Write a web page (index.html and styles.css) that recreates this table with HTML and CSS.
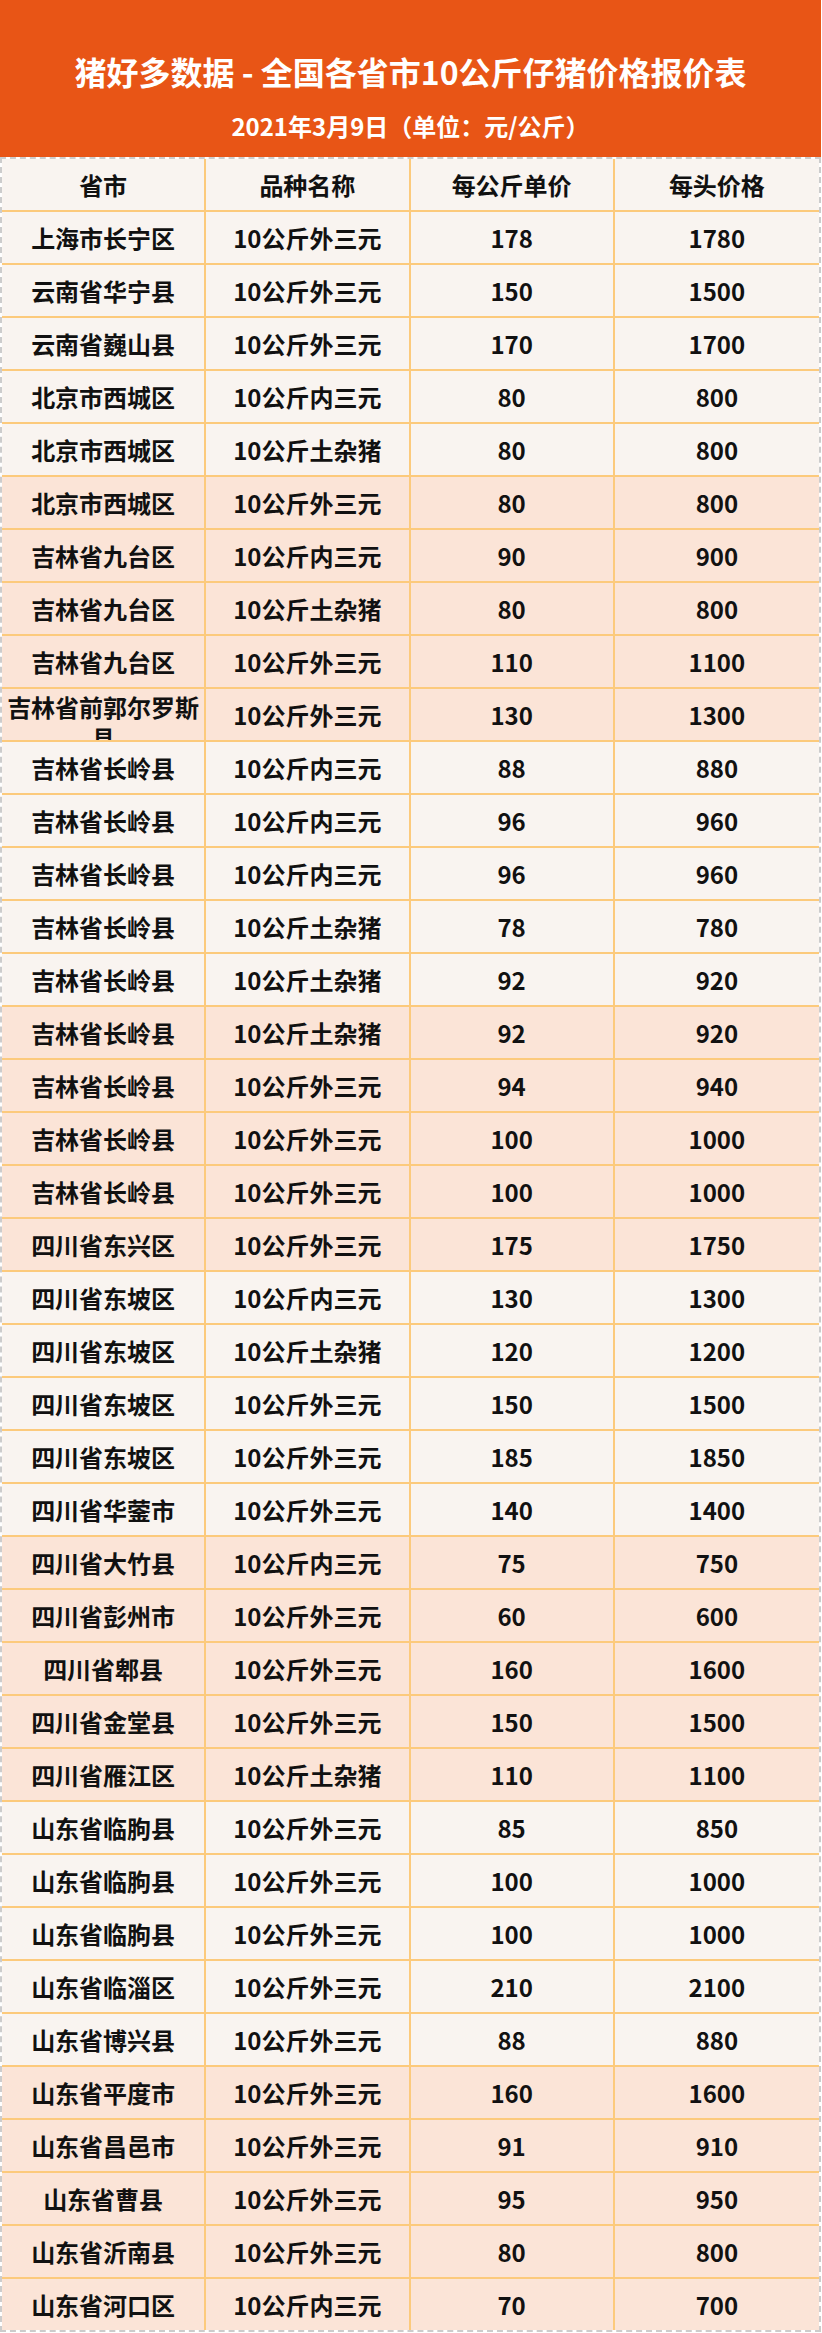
FILE: index.html
```html
<!DOCTYPE html>
<html lang="zh-CN">
<head>
<meta charset="utf-8">
<title>猪好多数据 - 全国各省市10公斤仔猪价格报价表</title>
<link rel="stylesheet" href="styles.css">
</head>
<body>
<div class="page">
  <header class="banner">
    <h1 class="title">猪好多数据 - 全国各省市10公斤仔猪价格报价表</h1>
    <p class="subtitle">2021年3月9日（单位：元/公斤）</p>
  </header>
  <div class="table">
    <div class="row head"><div class="cell">省市</div><div class="cell">品种名称</div><div class="cell">每公斤单价</div><div class="cell">每头价格</div></div>
    <div class="row light"><div class="cell">上海市长宁区</div><div class="cell">10公斤外三元</div><div class="cell">178</div><div class="cell">1780</div></div>
    <div class="row light"><div class="cell">云南省华宁县</div><div class="cell">10公斤外三元</div><div class="cell">150</div><div class="cell">1500</div></div>
    <div class="row light"><div class="cell">云南省巍山县</div><div class="cell">10公斤外三元</div><div class="cell">170</div><div class="cell">1700</div></div>
    <div class="row light"><div class="cell">北京市西城区</div><div class="cell">10公斤内三元</div><div class="cell">80</div><div class="cell">800</div></div>
    <div class="row light"><div class="cell">北京市西城区</div><div class="cell">10公斤土杂猪</div><div class="cell">80</div><div class="cell">800</div></div>
    <div class="row pink"><div class="cell">北京市西城区</div><div class="cell">10公斤外三元</div><div class="cell">80</div><div class="cell">800</div></div>
    <div class="row pink"><div class="cell">吉林省九台区</div><div class="cell">10公斤内三元</div><div class="cell">90</div><div class="cell">900</div></div>
    <div class="row pink"><div class="cell">吉林省九台区</div><div class="cell">10公斤土杂猪</div><div class="cell">80</div><div class="cell">800</div></div>
    <div class="row pink"><div class="cell">吉林省九台区</div><div class="cell">10公斤外三元</div><div class="cell">110</div><div class="cell">1100</div></div>
    <div class="row pink"><div class="cell wrap">吉林省前郭尔罗斯县</div><div class="cell">10公斤外三元</div><div class="cell">130</div><div class="cell">1300</div></div>
    <div class="row light"><div class="cell">吉林省长岭县</div><div class="cell">10公斤内三元</div><div class="cell">88</div><div class="cell">880</div></div>
    <div class="row light"><div class="cell">吉林省长岭县</div><div class="cell">10公斤内三元</div><div class="cell">96</div><div class="cell">960</div></div>
    <div class="row light"><div class="cell">吉林省长岭县</div><div class="cell">10公斤内三元</div><div class="cell">96</div><div class="cell">960</div></div>
    <div class="row light"><div class="cell">吉林省长岭县</div><div class="cell">10公斤土杂猪</div><div class="cell">78</div><div class="cell">780</div></div>
    <div class="row light"><div class="cell">吉林省长岭县</div><div class="cell">10公斤土杂猪</div><div class="cell">92</div><div class="cell">920</div></div>
    <div class="row pink"><div class="cell">吉林省长岭县</div><div class="cell">10公斤土杂猪</div><div class="cell">92</div><div class="cell">920</div></div>
    <div class="row pink"><div class="cell">吉林省长岭县</div><div class="cell">10公斤外三元</div><div class="cell">94</div><div class="cell">940</div></div>
    <div class="row pink"><div class="cell">吉林省长岭县</div><div class="cell">10公斤外三元</div><div class="cell">100</div><div class="cell">1000</div></div>
    <div class="row pink"><div class="cell">吉林省长岭县</div><div class="cell">10公斤外三元</div><div class="cell">100</div><div class="cell">1000</div></div>
    <div class="row pink"><div class="cell">四川省东兴区</div><div class="cell">10公斤外三元</div><div class="cell">175</div><div class="cell">1750</div></div>
    <div class="row light"><div class="cell">四川省东坡区</div><div class="cell">10公斤内三元</div><div class="cell">130</div><div class="cell">1300</div></div>
    <div class="row light"><div class="cell">四川省东坡区</div><div class="cell">10公斤土杂猪</div><div class="cell">120</div><div class="cell">1200</div></div>
    <div class="row light"><div class="cell">四川省东坡区</div><div class="cell">10公斤外三元</div><div class="cell">150</div><div class="cell">1500</div></div>
    <div class="row light"><div class="cell">四川省东坡区</div><div class="cell">10公斤外三元</div><div class="cell">185</div><div class="cell">1850</div></div>
    <div class="row light"><div class="cell">四川省华蓥市</div><div class="cell">10公斤外三元</div><div class="cell">140</div><div class="cell">1400</div></div>
    <div class="row pink"><div class="cell">四川省大竹县</div><div class="cell">10公斤内三元</div><div class="cell">75</div><div class="cell">750</div></div>
    <div class="row pink"><div class="cell">四川省彭州市</div><div class="cell">10公斤外三元</div><div class="cell">60</div><div class="cell">600</div></div>
    <div class="row pink"><div class="cell">四川省郫县</div><div class="cell">10公斤外三元</div><div class="cell">160</div><div class="cell">1600</div></div>
    <div class="row pink"><div class="cell">四川省金堂县</div><div class="cell">10公斤外三元</div><div class="cell">150</div><div class="cell">1500</div></div>
    <div class="row pink"><div class="cell">四川省雁江区</div><div class="cell">10公斤土杂猪</div><div class="cell">110</div><div class="cell">1100</div></div>
    <div class="row light"><div class="cell">山东省临朐县</div><div class="cell">10公斤外三元</div><div class="cell">85</div><div class="cell">850</div></div>
    <div class="row light"><div class="cell">山东省临朐县</div><div class="cell">10公斤外三元</div><div class="cell">100</div><div class="cell">1000</div></div>
    <div class="row light"><div class="cell">山东省临朐县</div><div class="cell">10公斤外三元</div><div class="cell">100</div><div class="cell">1000</div></div>
    <div class="row light"><div class="cell">山东省临淄区</div><div class="cell">10公斤外三元</div><div class="cell">210</div><div class="cell">2100</div></div>
    <div class="row light"><div class="cell">山东省博兴县</div><div class="cell">10公斤外三元</div><div class="cell">88</div><div class="cell">880</div></div>
    <div class="row pink"><div class="cell">山东省平度市</div><div class="cell">10公斤外三元</div><div class="cell">160</div><div class="cell">1600</div></div>
    <div class="row pink"><div class="cell">山东省昌邑市</div><div class="cell">10公斤外三元</div><div class="cell">91</div><div class="cell">910</div></div>
    <div class="row pink"><div class="cell">山东省曹县</div><div class="cell">10公斤外三元</div><div class="cell">95</div><div class="cell">950</div></div>
    <div class="row pink"><div class="cell">山东省沂南县</div><div class="cell">10公斤外三元</div><div class="cell">80</div><div class="cell">800</div></div>
    <div class="row pink"><div class="cell">山东省河口区</div><div class="cell">10公斤内三元</div><div class="cell">70</div><div class="cell">700</div></div>
  </div>
</div>
</body>
</html>
```
FILE: styles.css
```css
* { box-sizing: border-box; }
html, body { margin: 0; padding: 0; background: #ffffff; }
body {
  font-family: "Noto Sans CJK SC", "Noto Sans", "Liberation Sans", sans-serif;
  color: #111111;
}
.page { width: 821px; }
.banner {
  background: #e85516;
  height: 157px;
  padding-top: 48px;
  color: #ffffff;
  text-align: center;
}
.title {
  margin: 0;
  font-size: 32px;
  line-height: 46px;
  font-weight: 700;
}
.subtitle {
  margin: 15px 0 0;
  font-size: 24px;
  line-height: 34px;
  font-weight: 700;
}
.table {
  border: 2px dashed #cccccc;
}
.row {
  display: grid;
  grid-template-columns: repeat(4, 1fr);
  height: 53px;
  border-bottom: 2px solid #fcca7c;
}
.row:last-child { border-bottom: none; height: 51px; }
.light, .head { background: #f9f4f0; }
.pink { background: #fbe4d7; }
.cell {
  display: flex;
  align-items: center;
  justify-content: center;
  text-align: center;
  font-size: 24px;
  line-height: 31px;
  font-weight: 700;
  border-right: 2px solid #fcca7c;
  padding: 0 4px;
  overflow: hidden;
}
.cell:last-child { border-right: none; }
.cell.wrap {
  display: block;
  padding-top: 2px;
  overflow: hidden;
}
```
